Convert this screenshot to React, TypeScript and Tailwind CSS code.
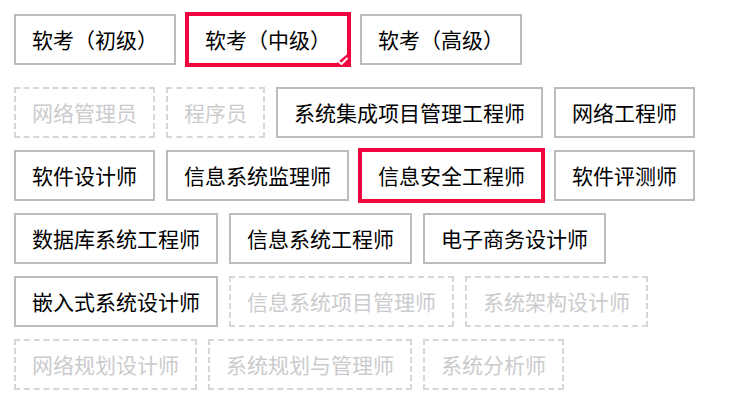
import React from "react";

type Item = { label: string; state?: "normal" | "disabled" | "selected"; check?: boolean };

const levels: Item[] = [
  { label: "软考（初级）" },
  { label: "软考（中级）", state: "selected", check: true },
  { label: "软考（高级）" },
];

const exams: Item[] = [
  { label: "网络管理员", state: "disabled" },
  { label: "程序员", state: "disabled" },
  { label: "系统集成项目管理工程师" },
  { label: "网络工程师" },
  { label: "软件设计师" },
  { label: "信息系统监理师" },
  { label: "信息安全工程师", state: "selected" },
  { label: "软件评测师" },
  { label: "数据库系统工程师" },
  { label: "信息系统工程师" },
  { label: "电子商务设计师" },
  { label: "嵌入式系统设计师" },
  { label: "信息系统项目管理师", state: "disabled" },
  { label: "系统架构设计师", state: "disabled" },
  { label: "网络规划设计师", state: "disabled" },
  { label: "系统规划与管理师", state: "disabled" },
  { label: "系统分析师", state: "disabled" },
];

function Tag({ item }: { item: Item }) {
  const state = item.state ?? "normal";
  const cls =
    state === "disabled"
      ? "border-2 border-dashed border-[#d7d7d9] text-[#cbcbcd]"
      : state === "selected"
      ? "border-2 border-solid border-[#f2053e] text-black shadow-[0_0_0_2px_#f2053e]"
      : "border-2 border-solid border-[#bcbcc0] text-black";
  return (
    <div
      className={`relative flex h-[51px] items-center justify-center whitespace-nowrap bg-white px-[16px] text-[21px] leading-none ${cls}`}
    >
      {item.label}
      {item.check && (
        <svg
          className="absolute -bottom-[4px] -right-[4px]"
          width="19"
          height="16"
          viewBox="0 0 19 16"
        >
          <polygon points="19,0 19,16 0,16" fill="#f2053e" />
          <polyline
            points="6.5,10.5 9.5,13 15,7.5"
            fill="none"
            stroke="#fff"
            strokeWidth="2"
            strokeLinecap="round"
            strokeLinejoin="round"
          />
        </svg>
      )}
    </div>
  );
}

export default function App() {
  return (
    <div
      className="min-h-[405px] w-[739px] bg-white pl-[14px] pt-[14px]"
      style={{ fontFamily: '"Noto Sans CJK SC", "Noto Sans", sans-serif' }}
    >
      <div className="flex flex-wrap gap-x-[11px]">
        {levels.map((it) => (
          <Tag key={it.label} item={it} />
        ))}
      </div>
      <div className="mt-[22px] flex flex-wrap gap-x-[11px] gap-y-[12px] pr-[20px]">
        {exams.map((it) => (
          <Tag key={it.label} item={it} />
        ))}
      </div>
    </div>
  );
}
